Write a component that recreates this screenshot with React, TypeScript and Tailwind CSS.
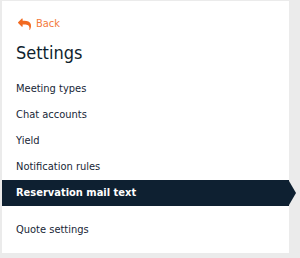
const items = ['Meeting types', 'Chat accounts', 'Yield', 'Notification rules'];

function ReplyIcon() {
  return (
    <svg viewBox="0 0 1792 1792" className="h-[13px] w-[13px]" fill="#f26a21">
      <path d="M1792 1120q0 166-127 451-3 7-10.5 24t-13.5 30-13 22q-12 17-28 17-15 0-23.5-10t-8.5-25q0-9 2.5-26.5t2.5-23.5q5-68 5-123 0-101-17.5-181t-48.5-138.5-80-101-105.5-69.5-133-42.5-154-21.5-175.5-6h-224v256q0 26-19 45t-45 19-45-19l-512-512q-19-19-19-45t19-45l512-512q19-19 45-19t45 19 19 45v256h224q713 0 875 403 53 134 53 333z" />
    </svg>
  );
}

export default function App() {
  return (
    <div
      className="h-[258px] w-[300px] bg-[#ebebeb] pl-[2px] pt-[1px]"
      style={{ fontFamily: '"DejaVu Sans Condensed", "DejaVu Sans", sans-serif' }}
    >
      <div className="relative flex h-[252px] w-[287px] flex-col bg-white pt-[13px]">
        <div className="flex h-5 items-center gap-[5px] pl-4 text-[11px] text-[#f47a3c]">
          <ReplyIcon />
          <span>Back</span>
        </div>
        <h1 className="mt-[7px] pl-[14px] text-[18px] leading-6 text-[#0f1f2e]">Settings</h1>
        <ul className="mt-[11px] flex flex-col">
          {items.map((t) => (
            <li key={t} className="flex h-[26px] items-center pl-[14px] text-[11px] text-[#172636]">
              {t}
            </li>
          ))}
          <li className="relative flex h-[26px] items-center bg-[#0e2031] pl-[14px] text-[11px] font-bold text-white">
            Reservation mail text
            <span className="absolute right-[-7px] top-[1px] h-0 w-0 border-y-[12px] border-l-[7px] border-y-transparent border-l-[#0e2031]" />
          </li>
          <li className="mt-[11px] flex h-[26px] items-center pl-[14px] text-[11px] text-[#172636]">
            Quote settings
          </li>
        </ul>
      </div>
    </div>
  );
}
